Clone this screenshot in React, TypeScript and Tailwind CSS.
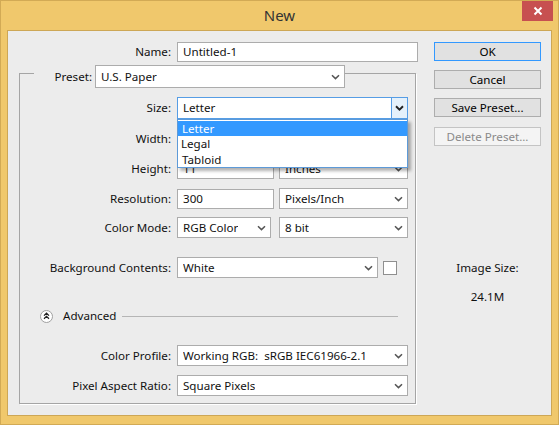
import React from "react";

const font = { fontFamily: '"Noto Sans", "Segoe UI", Tahoma, sans-serif' };

function Chevron({ bold = false }: { bold?: boolean }) {
  return (
    <svg width="9" height="6" viewBox="0 0 9 6" className="shrink-0">
      <path
        d="M1 1.2 L4.5 4.6 L8 1.2"
        fill="none"
        stroke={bold ? "#222" : "#555"}
        strokeWidth={bold ? 1.9 : 1.5}
      />
    </svg>
  );
}

function Select({
  value,
  w,
  h = "h-[21px]",
}: {
  value: string;
  w: string;
  h?: string;
}) {
  return (
    <div
      className={`${w} ${h} shrink-0 bg-white border border-[#acacac] flex items-center pl-[5px] pr-[4px] justify-between`}
    >
      <span className="whitespace-pre overflow-hidden">{value}</span>
      <Chevron />
    </div>
  );
}

function Input({ value, w, h = "h-[20px]" }: { value: string; w: string; h?: string }) {
  return (
    <div
      className={`${w} ${h} shrink-0 bg-white border border-[#acacac] flex items-center pl-[5px]`}
    >
      <span className="whitespace-nowrap overflow-hidden">{value}</span>
    </div>
  );
}

function Label({ children }: { children: React.ReactNode }) {
  return (
    <div className="w-[151px] shrink-0 text-right mr-[6px] whitespace-nowrap">
      {children}
    </div>
  );
}

function Button({
  children,
  variant = "normal",
  className = "",
}: {
  children: React.ReactNode;
  variant?: "normal" | "default" | "disabled";
  className?: string;
}) {
  const cls =
    variant === "default"
      ? "bg-[#e1e1e1] border-[#3399ff] text-black"
      : variant === "disabled"
      ? "bg-[#f4f4f4] border-[#c4c4c4] text-[#8a8a8a]"
      : "bg-[#e1e1e1] border-[#adadad] text-black";
  return (
    <div
      className={`w-[107px] h-[19px] border ${cls} flex items-center justify-center ${className}`}
    >
      {children}
    </div>
  );
}

export default function App() {
  return (
    <div
      className="w-[559px] h-[425px] bg-[#f0c86c] border border-[#d2aa55] text-[11.6px] text-[#111] flex flex-col overflow-hidden"
      style={font}
    >
      {/* Title bar */}
      <div className="h-[29px] shrink-0 relative flex items-center justify-center">
        <span className="text-[15px] text-[#333] -mt-[1px]">New</span>
        <div className="absolute right-[5px] top-0 w-[31px] h-[20px] bg-[#c75050] flex items-center justify-center">
          <svg width="10" height="10" viewBox="0 0 10 10">
            <path d="M1.5 1.5 L8.5 8.5 M8.5 1.5 L1.5 8.5" stroke="#fff" strokeWidth="2" />
          </svg>
        </div>
      </div>

      {/* Client area */}
      <div className="mx-[6px] h-[386px] bg-[#ececec] border border-[#cda756] flex">
        {/* Left column */}
        <div className="w-[410px] shrink-0 pt-[11px]">
          {/* Name row */}
          <div className="flex items-center">
            <div className="w-[163px] shrink-0 text-right mr-[6px]">Name:</div>
            <Input value="Untitled-1" w="w-[241px]" />
          </div>

          {/* Group box */}
          <div className="ml-[11px] mt-[11px] w-[397px] h-[331px] border border-[#a5a5a5] shadow-[1px_1px_0_#ffffff]">
            {/* Preset row (over the top border) */}
            <div className="-mt-[9px] ml-[14px] w-fit flex items-center bg-[#ececec]">
              <div className="w-[61px] text-right pr-[3px]">Preset:</div>
              <Select value="U.S. Paper" w="w-[250px]" h="h-[23px]" />
            </div>

            {/* Size row with open dropdown */}
            <div className="mt-[9px] flex items-center">
              <Label>Size:</Label>
              <div className="relative">
                <div className="w-[231px] h-[22px] bg-white border border-[#569de5] flex items-stretch">
                  <div className="flex-1 flex items-center pl-[5px]">Letter</div>
                  <div className="w-[16px] bg-[#e5f1fb] border-l border-[#569de5] flex items-center justify-center">
                    <Chevron bold />
                  </div>
                </div>
                <div className="absolute left-0 top-[22px] w-[231px] h-[49px] bg-white border border-[#5d9ad8] shadow-[3px_3px_3px_rgba(0,0,0,0.3)] z-10 flex flex-col pt-[1px]">
                  <div className="h-[15px] bg-[#3399ff] text-white flex items-center pl-[4px]">
                    Letter
                  </div>
                  <div className="h-[16px] flex items-center pl-[3px]">Legal</div>
                  <div className="h-[15px] flex items-center pl-[4px]">Tabloid</div>
                </div>
              </div>
            </div>

            {/* Width (covered by the open list) */}
            <div className="mt-[9px] flex items-center">
              <Label>Width:</Label>
              <Input value="" w="w-[97px]" h="h-[21px]" />
              <div className="ml-[5px]">
                <Select value="" w="w-[129px]" />
              </div>
            </div>

            {/* Height */}
            <div className="mt-[9px] flex items-center">
              <Label>Height:</Label>
              <Input value="11" w="w-[97px]" h="h-[21px]" />
              <div className="ml-[5px]">
                <Select value="Inches" w="w-[129px]" />
              </div>
            </div>

            {/* Resolution */}
            <div className="mt-[9px] flex items-center">
              <Label>Resolution:</Label>
              <Input value="300" w="w-[97px]" h="h-[20px]" />
              <div className="ml-[5px]">
                <Select value="Pixels/Inch" w="w-[129px]" />
              </div>
            </div>

            {/* Color Mode */}
            <div className="mt-[8px] flex items-center">
              <Label>Color Mode:</Label>
              <Select value="RGB Color" w="w-[94px]" />
              <div className="ml-[8px]">
                <Select value="8 bit" w="w-[129px]" />
              </div>
            </div>

            {/* Background Contents */}
            <div className="mt-[19px] flex items-center">
              <Label>Background Contents:</Label>
              <Select value="White" w="w-[201px]" />
              <div className="ml-[5px] w-[14px] h-[14px] bg-white border border-[#8f8f8f]" />
            </div>

            {/* Advanced */}
            <div className="mt-[31px] h-[14px] flex items-center pl-[20px]">
              <div className="w-[13px] h-[13px] rounded-full bg-white border border-[#a0a0a0] flex items-center justify-center">
                <svg width="7" height="8" viewBox="0 0 7 8">
                  <path
                    d="M1 3.6 L3.5 1.2 L6 3.6 M1 6.8 L3.5 4.4 L6 6.8"
                    fill="none"
                    stroke="#222"
                    strokeWidth="1.3"
                  />
                </svg>
              </div>
              <span className="ml-[10px]">Advanced</span>
              <div className="ml-[6px] flex-1 mr-[17px] h-[1px] bg-[#b5b5b5] mt-[1px]" />
            </div>

            {/* Color Profile */}
            <div className="mt-[22px] flex items-center">
              <Label>Color Profile:</Label>
              <Select value="Working RGB:  sRGB IEC61966-2.1" w="w-[231px]" />
            </div>

            {/* Pixel Aspect Ratio */}
            <div className="mt-[9px] flex items-center">
              <Label>Pixel Aspect Ratio:</Label>
              <Select value="Square Pixels" w="w-[231px]" />
            </div>
          </div>
        </div>

        {/* Right column */}
        <div className="ml-[16px] w-[107px] shrink-0 pt-[11px] flex flex-col">
          <Button variant="default">OK</Button>
          <Button className="mt-[9px]">Cancel</Button>
          <Button className="mt-[9px]">Save Preset...</Button>
          <Button variant="disabled" className="mt-[10px]">
            Delete Preset...
          </Button>
          <div className="mt-[114px] text-center leading-[16px]">Image Size:</div>
          <div className="mt-[13px] text-center leading-[16px]">24.1M</div>
        </div>
      </div>
    </div>
  );
}
